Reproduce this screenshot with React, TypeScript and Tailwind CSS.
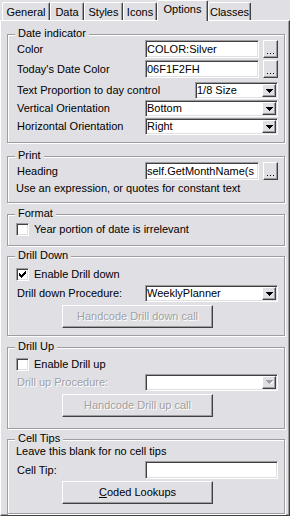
import React from "react";

const SUNKEN =
  "border border-t-[#9d9da1] border-l-[#9d9da1] border-b-white border-r-white shadow-[inset_1px_1px_0_#404040,inset_-1px_-1px_0_#e0dfe3]";
const RAISED =
  "border border-t-white border-l-white border-b-[#404040] border-r-[#404040] shadow-[inset_-1px_-1px_0_#9d9da1]";
const DISABLED = "text-[#a0a0a4] [text-shadow:1px_1px_0_#ffffff]";

function Tab({ label, w, selected }: { label: string; w: string; selected?: boolean }) {
  if (selected) {
    return (
      <div
        className={`relative z-10 -mb-[1px] h-[21px] ${w} flex justify-center pt-[2px] bg-[#e0dfe3] border-t border-l border-r border-t-white border-l-white border-r-[#404040] shadow-[inset_-1px_0_0_#9d9da1] rounded-t-[2px]`}
      >
        {label}
      </div>
    );
  }
  return (
    <div
      className={`h-[18px] ${w} flex justify-center pt-[3px] border-t border-l border-r border-t-white border-l-white border-r-[#404040] shadow-[inset_-1px_0_0_#9d9da1] rounded-t-[2px]`}
    >
      {label}
    </div>
  );
}

function Frame({
  title,
  className,
  children,
}: {
  title: string;
  className: string;
  children?: React.ReactNode;
}) {
  return (
    <div
      className={`relative w-[278px] shrink-0 border border-[#9d9da1] shadow-[inset_1px_1px_0_#ffffff,1px_1px_0_#ffffff] flex flex-col ${className}`}
    >
      <span className="absolute left-[7px] top-[-8px] px-[3px] bg-[#e0dfe3] leading-[13px]">{title}</span>
      {children}
    </div>
  );
}

function TextBox({ value, w }: { value: string; w: string }) {
  return (
    <div className={`${SUNKEN} bg-white h-[18px] ${w} flex items-center pl-[1px] overflow-hidden whitespace-nowrap`}>
      {value}
    </div>
  );
}

function Dots() {
  return (
    <div className={`${RAISED} ml-[4px] w-[15px] h-[18px] flex items-end justify-center pb-[3px]`}>
      <svg width="7" height="1" viewBox="0 0 7 1" shapeRendering="crispEdges">
        <rect x="0" y="0" width="1" height="1" fill="#000" />
        <rect x="3" y="0" width="1" height="1" fill="#000" />
        <rect x="6" y="0" width="1" height="1" fill="#000" />
      </svg>
    </div>
  );
}

function Select({ value, w, disabled }: { value: string; w: string; disabled?: boolean }) {
  return (
    <div className={`${SUNKEN} bg-white h-[17px] ${w} flex items-center justify-between pl-[1px] pr-[1px]`}>
      <span className="whitespace-nowrap">{value}</span>
      <div className={`${RAISED} w-[14px] h-[13px] bg-[#e0dfe3] flex items-center justify-center`}>
        <svg width="7" height="4" viewBox="0 0 7 4" shapeRendering="crispEdges">
          {disabled ? (
            <>
              <path d="M1 1h7L4.5 5z" fill="#ffffff" />
              <path d="M0 0h7L3.5 4z" fill="#a0a0a4" />
            </>
          ) : (
            <path d="M0 0h7L3.5 4z" fill="#000000" />
          )}
        </svg>
      </div>
    </div>
  );
}

function Check({ checked, label }: { checked?: boolean; label: string }) {
  return (
    <div className="flex items-center pl-[8px] h-[13px]">
      <div className={`${SUNKEN} bg-white w-[13px] h-[13px] flex items-center justify-center`}>
        {checked && (
          <svg width="7" height="7" viewBox="0 0 7 7" shapeRendering="crispEdges">
            <path
              d="M0 2h1v1h1v1h1v-1h1v-1h1v-1h1v-1h1v3h-1v1h-1v1h-1v1h-1v1h-1v-1h-1v-1h-1z"
              fill="#000"
            />
          </svg>
        )}
      </div>
      <span className="ml-[5px]">{label}</span>
    </div>
  );
}

function Button({ label, disabled, mt }: { label: React.ReactNode; disabled?: boolean; mt: string }) {
  return (
    <div
      className={`${RAISED} ${mt} ml-[54px] w-[151px] h-[23px] flex items-center justify-center ${
        disabled ? DISABLED : ""
      }`}
    >
      {label}
    </div>
  );
}

export default function App() {
  return (
    <div className="w-[290px] h-[516px] bg-[#e0dfe3] text-black text-[11px] leading-[13px] font-['Liberation_Sans',Arial,sans-serif] flex flex-col overflow-hidden">
      <div className="flex h-[20px] items-end pl-[2px]">
        <Tab label="General" w="w-[48px]" />
        <Tab label="Data" w="w-[34px]" />
        <Tab label="Styles" w="w-[39px]" />
        <Tab label="Icons" w="w-[34px]" />
        <Tab label="Options" w="w-[51px]" selected />
        <Tab label="Classes" w="w-[43px]" />
      </div>
      <div className="h-[496px] flex flex-col pl-[6px] border border-t-white border-l-white border-r-[#404040] border-b-[#404040] shadow-[inset_-1px_-1px_0_#9d9da1]">
        <Frame title="Date indicator" className="mt-[13px] h-[109px] pt-[5px]">
          <div className="flex items-center pl-[9px] h-[18px]">
            <span className="w-[128px]">Color</span>
            <TextBox value="COLOR:Silver" w="w-[114px]" />
            <Dots />
          </div>
          <div className="flex items-center pl-[9px] h-[18px] mt-[2px]">
            <span className="w-[128px]">Today's Date Color</span>
            <TextBox value="06F1F2FH" w="w-[114px]" />
            <Dots />
          </div>
          <div className="flex items-center pl-[9px] h-[17px] mt-[4px]">
            <span className="w-[178px]">Text Proportion to day control</span>
            <Select value="1/8 Size" w="w-[83px]" />
          </div>
          <div className="flex items-center pl-[9px] h-[17px] mt-[1px]">
            <span className="w-[128px]">Vertical Orientation</span>
            <Select value="Bottom" w="w-[133px]" />
          </div>
          <div className="flex items-center pl-[9px] h-[17px] mt-[1px]">
            <span className="w-[128px]">Horizontal Orientation</span>
            <Select value="Right" w="w-[133px]" />
          </div>
        </Frame>

        <Frame title="Print" className="mt-[13px] h-[47px] pt-[5px]">
          <div className="flex items-center pl-[9px] h-[18px]">
            <span className="w-[128px]">Heading</span>
            <TextBox value="self.GetMonthName(s" w="w-[114px]" />
            <Dots />
          </div>
          <div className="pl-[8px] mt-[2px]">Use an expression, or quotes for constant text</div>
        </Frame>

        <Frame title="Format" className="mt-[11px] h-[32px] pt-[8px]">
          <Check label="Year portion of date is irrelevant" />
        </Frame>

        <Frame title="Drill Down" className="mt-[10px] h-[80px] pt-[11px]">
          <Check checked label="Enable Drill down" />
          <div className="flex items-center pl-[9px] h-[17px] mt-[4px]">
            <span className="w-[128px]">Drill down Procedure:</span>
            <Select value="WeeklyPlanner" w="w-[133px]" />
          </div>
          <Button label="Handcode Drill down call" disabled mt="mt-[3px]" />
        </Frame>

        <Frame title="Drill Up" className="mt-[11px] h-[82px] pt-[10px]">
          <Check label="Enable Drill up" />
          <div className="flex items-center pl-[9px] h-[18px] mt-[2px]">
            <span className={`w-[128px] ${DISABLED}`}>Drill up Procedure:</span>
            <Select value="" w="w-[133px]" disabled />
          </div>
          <Button label="Handcode Drill up call" disabled mt="mt-[3px]" />
        </Frame>

        <Frame title="Cell Tips" className="mt-[10px] h-[75px] pt-[5px]">
          <div className="pl-[8px]">Leave this blank for no cell tips</div>
          <div className="flex items-center pl-[9px] h-[18px] mt-[3px]">
            <span className="w-[128px]">Cell Tip:</span>
            <TextBox value="" w="w-[133px]" />
          </div>
          <Button
            label={
              <span>
                <span className="underline">C</span>oded Lookups
              </span>
            }
            mt="mt-[2px]"
          />
        </Frame>
      </div>
    </div>
  );
}
